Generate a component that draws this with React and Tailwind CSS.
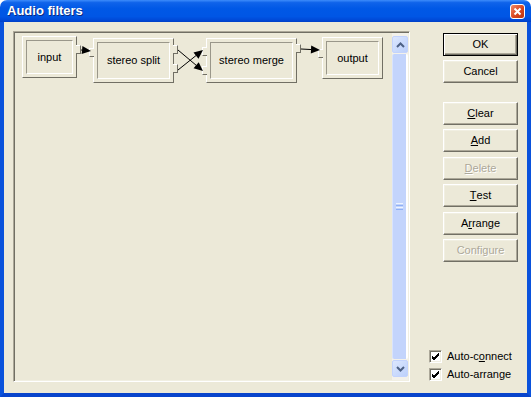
import React from "react";

const nodes = [
  { label: "input", pos: "left-[7px] top-[3px] w-[55px] h-[42px]" },
  { label: "stereo split", pos: "left-[78px] top-[5px] w-[81px] h-[45px]" },
  { label: "stereo merge", pos: "left-[191px] top-[5px] w-[91px] h-[45px]" },
  { label: "output", pos: "left-[307px] top-[4px] w-[61px] h-[42px]" },
];

const pins = [
  { side: "r", pos: "left-[61px] top-[12px]" },
  { side: "l", pos: "left-[74px] top-[15px]" },
  { side: "r", pos: "left-[158px] top-[12px]" },
  { side: "r", pos: "left-[158px] top-[31px]" },
  { side: "l", pos: "left-[187px] top-[14px]" },
  { side: "l", pos: "left-[187px] top-[33px]" },
  { side: "r", pos: "left-[281px] top-[11px]" },
  { side: "l", pos: "left-[303px] top-[16px]" },
];

const arrows = [
  [66, 17, 76, 18],
  [163, 17, 188, 38],
  [163, 37, 188, 17],
  [286, 16, 305, 17],
];

function Arrow({ x1, y1, x2, y2 }) {
  const dx = x2 - x1;
  const dy = y2 - y1;
  const len = Math.hypot(dx, dy);
  const ux = dx / len;
  const uy = dy / len;
  const L = 9;
  const W = 4;
  const bx = x2 - ux * L;
  const by = y2 - uy * L;
  const pts = `${x2},${y2} ${bx - uy * W},${by + ux * W} ${bx + uy * W},${by - ux * W}`;
  return (
    <g>
      <line x1={x1} y1={y1} x2={bx} y2={by} stroke="#000" strokeWidth="1" />
      <polygon points={pts} fill="#000" />
    </g>
  );
}

function Node({ label, pos }) {
  return (
    <div
      className={`absolute ${pos} border border-t-white border-l-white border-r-[#716f64] border-b-[#716f64] p-[3px] bg-[#ece9d8]`}
    >
      <div className="w-full h-full border border-t-[#9a978a] border-l-[#9a978a] border-r-white border-b-white flex items-center justify-center whitespace-nowrap">
        {label}
      </div>
    </div>
  );
}

function Pin({ side, pos }) {
  return side === "r" ? (
    <div
      className={`absolute ${pos} w-[5px] h-[9px] bg-[#ece9d8] border-t border-r border-b border-t-white border-r-[#716f64] border-b-[#716f64] z-10`}
    />
  ) : (
    <div
      className={`absolute ${pos} w-[5px] h-[9px] bg-[#ece9d8] border-t border-l border-b border-t-white border-l-white border-b-[#716f64] z-10`}
    />
  );
}

function Btn({ children, def, disabled, className = "" }) {
  return (
    <button
      className={`w-[75px] h-[23px] flex items-center justify-center bg-[#ece9d8] ${
        def
          ? "border border-black shadow-[inset_1px_1px_#fff,inset_-1px_-1px_#716f64,inset_-2px_-2px_#aca899]"
          : "border border-t-white border-l-white border-r-[#716f64] border-b-[#716f64] shadow-[inset_-1px_-1px_#aca899,inset_1px_1px_#f1efe2]"
      } ${disabled ? "text-[#aca899] [text-shadow:1px_1px_#fff]" : "text-black"} ${className}`}
    >
      {children}
    </button>
  );
}

function Check({ children }) {
  return (
    <div className="flex items-center gap-[5px] h-[18px]">
      <div className="w-[13px] h-[13px] bg-white border border-t-[#aca899] border-l-[#aca899] border-r-white border-b-white shadow-[inset_1px_1px_#716f64,inset_-1px_-1px_#f1efe2] flex items-center justify-center">
        <svg width="9" height="9" viewBox="0 0 9 9">
          <path d="M1 4 L3 6 L8 1 M1 5 L3 7 L8 2 M1 6 L3 8 L8 3" stroke="#000" strokeWidth="1" fill="none" />
        </svg>
      </div>
      <span>{children}</span>
    </div>
  );
}

function ScrollBtn({ up }) {
  return (
    <div className="h-[17px] rounded-[2px] border border-[#c3d3fd] bg-[linear-gradient(135deg,#dce7fe,#bcd0fb)] flex items-center justify-center">
      <svg width="9" height="6" viewBox="0 0 9 6">
        <path
          d={up ? "M1 5 L4.5 1.5 L8 5" : "M1 1 L4.5 4.5 L8 1"}
          stroke="#4d6185"
          strokeWidth="2"
          fill="none"
        />
      </svg>
    </div>
  );
}

export default function App() {
  return (
    <div className="w-[531px] h-[397px] flex flex-col font-['Liberation_Sans',Arial,sans-serif] text-[11px] text-black select-none">
      {/* TITLE BAR */}
      <div className="h-[22px] rounded-t-[7px] bg-[linear-gradient(180deg,#3d8cfb_0%,#0f63ea_12%,#0058e6_40%,#0056e5_75%,#0048d6_92%,#003fc6_100%)] flex items-center pl-[7px] pr-[6px]">
        <span className="text-white font-bold text-[13px] [text-shadow:1px_1px_#0a2a80]">
          Audio filters
        </span>
        <div className="ml-auto w-[15px] h-[15px] rounded-[3px] border border-white bg-[linear-gradient(135deg,#f08a6a,#d9461f_55%,#b93512)] flex items-center justify-center">
          <svg width="9" height="9" viewBox="0 0 9 9">
            <path d="M1.5 1.5 L7.5 7.5 M7.5 1.5 L1.5 7.5" stroke="#fff" strokeWidth="2" />
          </svg>
        </div>
      </div>

      {/* BODY */}
      <div className="flex-1 flex border-x-4 border-b-4 border-x-[#0a52dc] border-b-[#0844cc] bg-[#ece9d8] p-[9px] gap-[19px]">
        {/* CANVAS */}
        <div className="w-[397px] h-[351px] border border-t-[#aca899] border-l-[#aca899] border-r-white border-b-white shadow-[inset_1px_1px_#716f64,inset_-1px_-1px_#f1efe2] p-[1px] flex">
          <div className="relative flex-1">
            {nodes.map((n) => (
              <Node key={n.label} {...n} />
            ))}
            {pins.map((p, i) => (
              <Pin key={i} {...p} />
            ))}
            <svg className="absolute inset-0 z-20 pointer-events-none" width="376" height="347">
              {arrows.map(([x1, y1, x2, y2], i) => (
                <Arrow key={i} x1={x1} y1={y1} x2={x2} y2={y2} />
              ))}
            </svg>
          </div>
          <div className="w-[16px] py-[3px] flex flex-col bg-[#f3f1ea]">
            <ScrollBtn up />
            <div className="flex-1 my-[1px] rounded-[2px] border-l border-l-[#d8e3fd] border-r-2 border-r-white bg-[#c3d4fc] flex items-center justify-center">
              <div className="flex flex-col gap-[1px]">
                <div className="w-[7px] h-[1px] bg-[#eef4fe]" />
                <div className="w-[7px] h-[1px] bg-[#8fb0f5]" />
                <div className="w-[7px] h-[1px] bg-[#eef4fe]" />
                <div className="w-[7px] h-[1px] bg-[#8fb0f5]" />
              </div>
            </div>
            <ScrollBtn />
          </div>
        </div>

        {/* BUTTONS */}
        <div className="w-[89px] flex flex-col">
          <div className="flex flex-col items-end">
            <Btn def className="mt-[2px]">OK</Btn>
            <Btn className="mt-[4px]">Cancel</Btn>
            <Btn className="mt-[19px]">
              <span className="underline underline-offset-[1px]">C</span>lear
            </Btn>
            <Btn className="mt-[4px]">
              <span className="underline underline-offset-[1px]">A</span>dd
            </Btn>
            <Btn disabled className="mt-[5px]">
              <span className="underline underline-offset-[1px]">D</span>elete
            </Btn>
            <Btn className="mt-[4px]">
              <span className="underline underline-offset-[1px]">T</span>est
            </Btn>
            <Btn className="mt-[5px]">
              A<span className="underline underline-offset-[1px]">r</span>range
            </Btn>
            <Btn disabled className="mt-[4px]">Configure</Btn>
          </div>
          <div className="mt-auto mb-[1px] flex flex-col">
            <Check>
              Auto-c<span className="underline underline-offset-[1px]">o</span>nnect
            </Check>
            <Check>Auto-arrange</Check>
          </div>
        </div>
      </div>
    </div>
  );
}
